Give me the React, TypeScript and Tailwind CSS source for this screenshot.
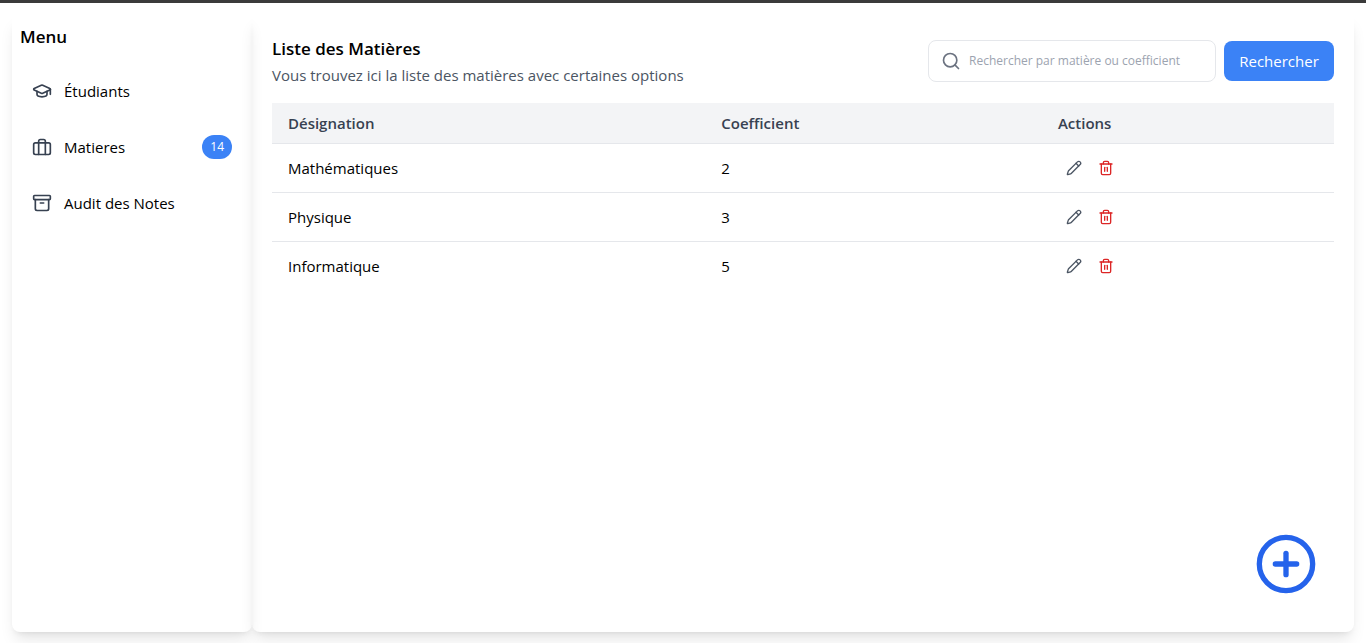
import { Archive, CirclePlus, GraduationCap, Pencil, Search, Trash2 } from "lucide-react";
import { FiBriefcase } from "react-icons/fi";

const menu = [
  { label: "Étudiants", icon: GraduationCap },
  { label: "Matieres", icon: FiBriefcase, count: 14 },
  { label: "Audit des Notes", icon: Archive },
];

const subjects = [
  { name: "Mathématiques", coefficient: 2 },
  { name: "Physique", coefficient: 3 },
  { name: "Informatique", coefficient: 5 },
];

function Sidebar() {
  return (
    <aside className="w-60 shrink-0 rounded-lg p-2 shadow-[0_10px_15px_-3px_rgba(0,0,0,0.1),0_4px_6px_-4px_rgba(0,0,0,0.1)]">
      <h2 className="text-[17px] leading-7 font-semibold">Menu</h2>
      <nav className="mt-4 flex flex-col gap-2">
        {menu.map(({ label, icon: Icon, count }) => (
          <a key={label} href="#" className="flex h-12 items-center gap-3 rounded-lg px-3">
            <Icon className="size-5 text-[#374151]" />
            <span className="flex-1">{label}</span>
            {count && (
              <span className="rounded-full bg-[#3b82f6] px-2 text-xs leading-6 text-white">{count}</span>
            )}
          </a>
        ))}
      </nav>
    </aside>
  );
}

function SubjectsTable() {
  return (
    <table className="mt-4 w-full table-fixed border-collapse text-left">
      <colgroup>
        <col className="w-[40.8%]" />
        <col className="w-[31.7%]" />
        <col />
      </colgroup>
      <thead>
        <tr className="h-10 border-b border-[#e5e7eb] bg-[#f3f4f6] text-[#374151]">
          <th className="px-4 font-semibold">Désignation</th>
          <th className="px-4 font-semibold">Coefficient</th>
          <th className="px-4 font-semibold">Actions</th>
        </tr>
      </thead>
      <tbody>
        {subjects.map(({ name, coefficient }) => (
          <tr key={name} className="h-[49px] border-b border-[#e5e7eb] last:border-b-0">
            <td className="px-4">{name}</td>
            <td className="px-4">{coefficient}</td>
            <td className="px-4">
              <div className="flex">
                <button type="button" aria-label="Modifier" className="p-2 text-[#4b5563]">
                  <Pencil className="size-4" />
                </button>
                <button type="button" aria-label="Supprimer" className="p-2 text-[#dc2626]">
                  <Trash2 className="size-4" />
                </button>
              </div>
            </td>
          </tr>
        ))}
      </tbody>
    </table>
  );
}

export default function App() {
  return (
    <div className="flex min-h-screen flex-col border-t-3 border-[#3b3b3b] bg-white font-['Open_Sans','Noto_Sans',sans-serif] text-[15px] leading-6 text-black">
      <div className="flex flex-1 px-3 pt-3 pb-[11px]">
        <Sidebar />
        <main className="min-w-0 flex-1 rounded-lg p-5 shadow-[0_10px_15px_-3px_rgba(0,0,0,0.1),0_4px_6px_-4px_rgba(0,0,0,0.1)]">
          <header className="flex items-center justify-between">
            <div>
              <h1 className="text-[17px] leading-7 font-semibold">Liste des Matières</h1>
              <p className="text-[#4b5563]">Vous trouvez ici la liste des matières avec certaines options</p>
            </div>
            <form className="flex items-center gap-2" onSubmit={(e) => e.preventDefault()}>
              <label className="flex h-[42px] w-72 items-center gap-2 rounded-lg border border-[#e5e7eb] px-3">
                <Search className="size-5 shrink-0 text-[#6b7280]" />
                <input
                  type="text"
                  aria-label="Rechercher par matière ou coefficient"
                  placeholder="Rechercher par matière ou coefficient"
                  className="min-w-0 flex-1 text-xs outline-none placeholder:text-[#9ca3af]"
                />
              </label>
              <button type="submit" className="h-10 w-[110px] rounded-lg bg-[#3b82f6] text-white">
                Rechercher
              </button>
            </form>
          </header>
          <SubjectsTable />
        </main>
      </div>
      <button type="button" aria-label="Ajouter une matière" className="fixed right-12 bottom-[47px] text-[#2563eb]">
        <CirclePlus className="size-16" />
      </button>
    </div>
  );
}
